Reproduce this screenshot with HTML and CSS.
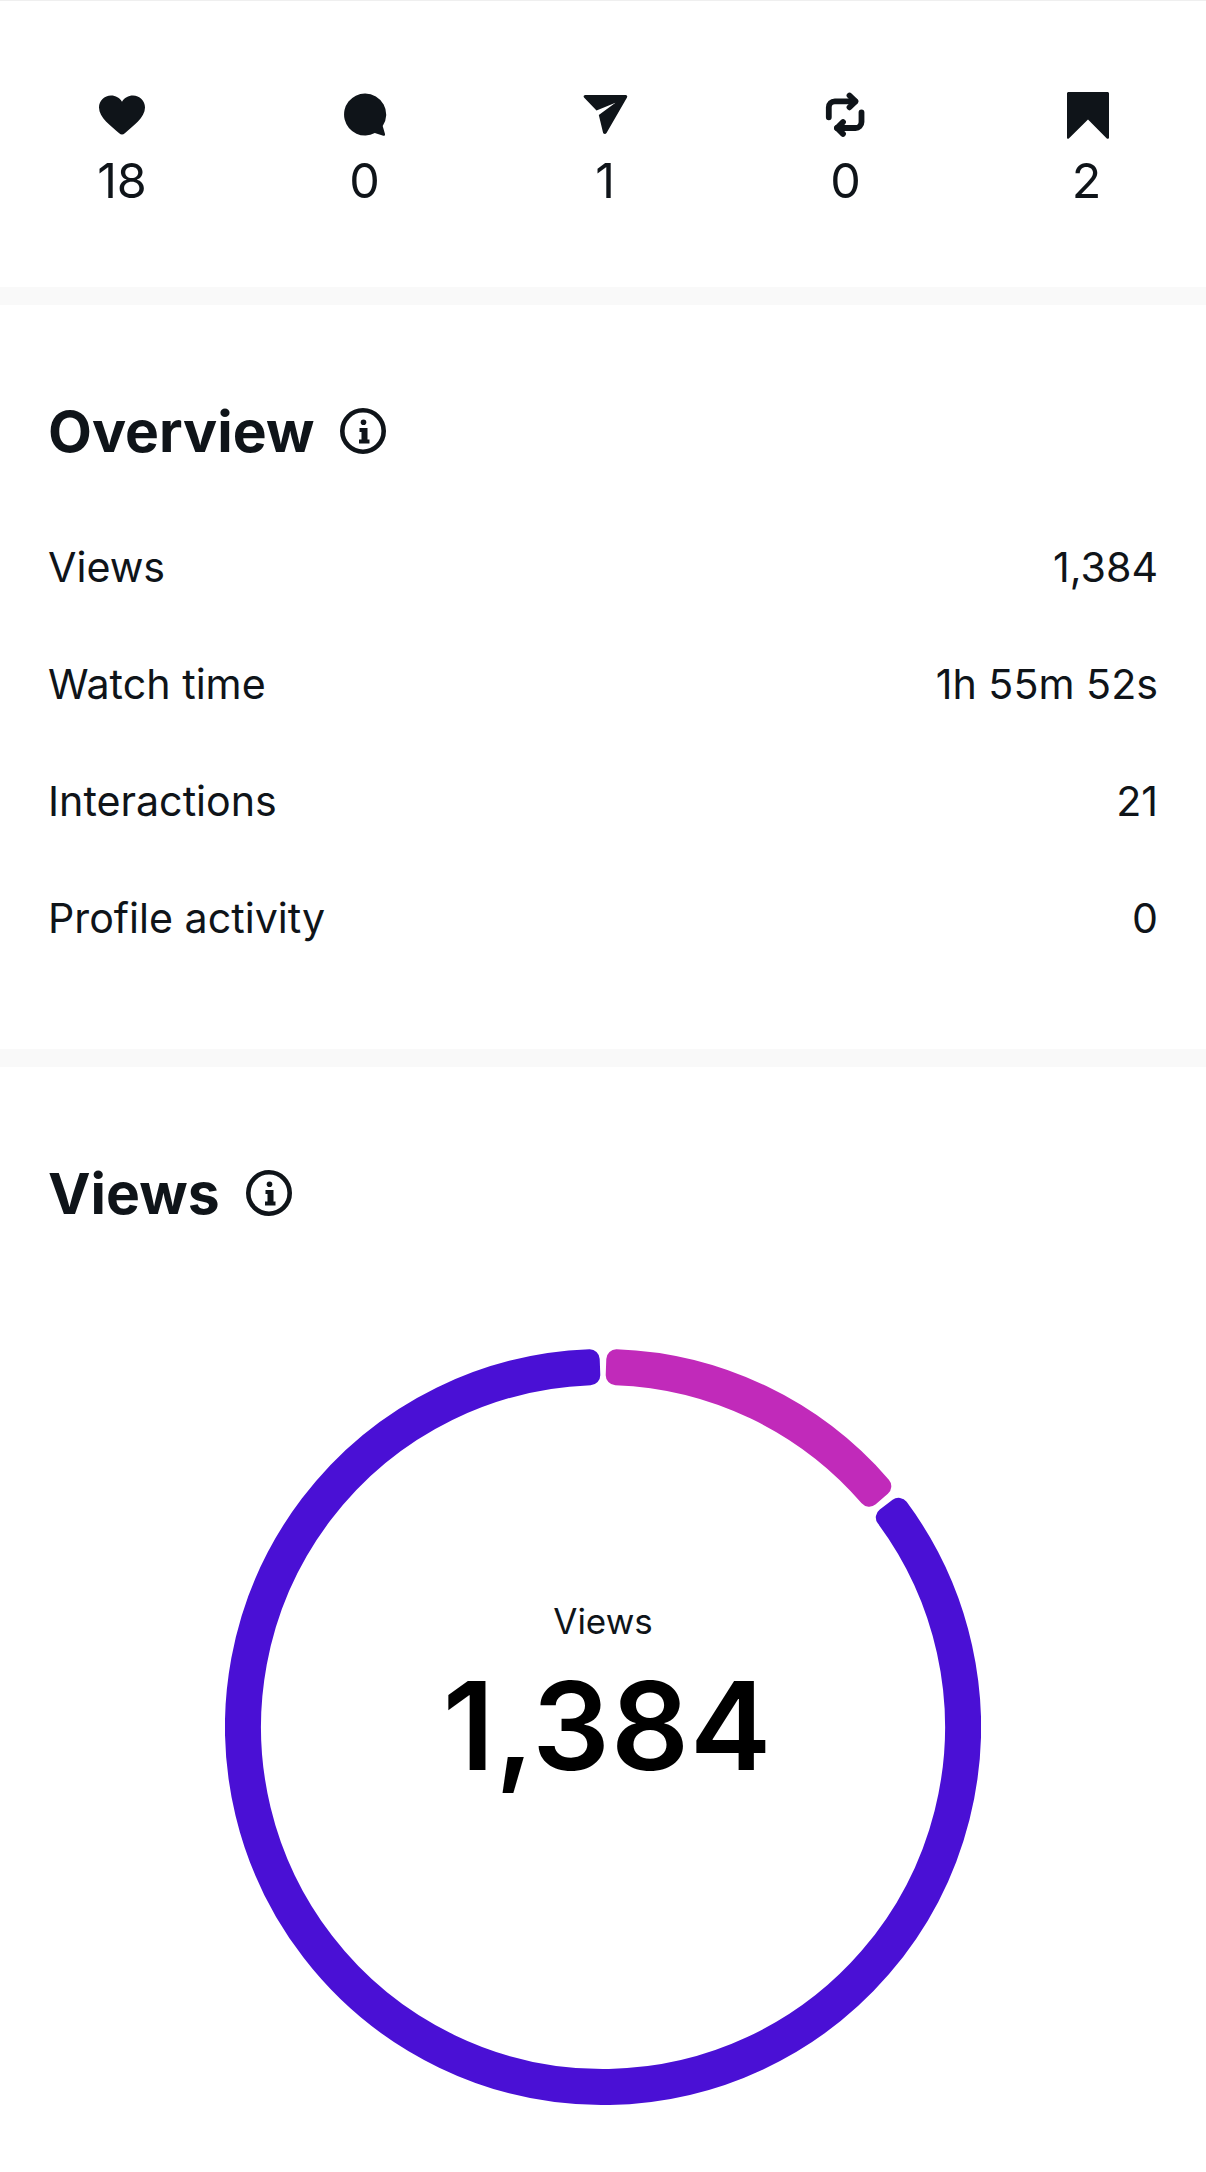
FILE: index.html
```html
<html>

<head>
    <meta charset="UTF-8">
    <title>Insights</title>
    <link rel="stylesheet" href="styles.css">
</head>

<body>
    <div class="stats">
        <div class="stat">
            <svg class="statIcon" viewBox="0 0 48 48">
                <path d="M24 43.500c-1 0-1.900-.5-2.800-1.300C13 35 1 26.500 1 16.500 1 9.500 6.500 4.500 13 4.500c4.800 0 8.600 2.300 11 6.200 2.400-3.900 6.200-6.200 11-6.200 6.500 0 12 5 12 12 0 10-12 18.500-20.200 25.700-.9.800-1.800 1.300-2.800 1.300z" />
            </svg>
            <span>18</span>
        </div>
        <div class="stat">
            <svg class="statIcon" viewBox="0 0 48 48">
                <path d="M24 2.500a21 21 0 1 0 9.800 39.600l8.500 2.700c1.200.3 2-.5 1.700-1.700l-2.300-8A21 21 0 0 0 24 2.500z" />
            </svg>
            <span>0</span>
        </div>
        <div class="stat">
            <svg class="statIcon" viewBox="0 0 48 48">
                <path d="M4.500 4H44.500c1.400 0 2.200 1.300 1.500 2.500L25.500 42c-.9 1.500-3.200 1.200-3.500-.5L17.800 24 34.500 11.700 15.500 19.500 3 6.500C2 5.300 3 4 4.500 4z" />
            </svg>
            <span>1</span>
        </div>
        <div class="stat">
            <svg class="statIcon repost" viewBox="0 0 48 48">
                <path d="M6.800 26.300V16.400a6 6 0 0 1 6-6H33" />
                <path d="M27.500 4.500l6 5.900-6 5.900" />
                <path d="M39.500 21.300V31a6 6 0 0 1-6 6H15" />
                <path d="M21 31.100l-6 5.900 6 5.900" />
            </svg>
            <span>0</span>
        </div>
        <div class="stat">
            <svg class="statIcon" viewBox="0 0 48 48">
                <path d="M4 2.500c0-.8.700-1.500 1.500-1.500h39c.8 0 1.500.7 1.500 1.500v44c0 1.300-1.300 1.800-2.200.9L25 28.500 5.800 47.400c-.9.900-1.800.4-1.800-.9z" />
            </svg>
            <span>2</span>
        </div>
    </div>

    <div class="divider"></div>

    <div class="section overview">
        <div class="sectionTitle">
            <h2>Overview</h2>
            <svg class="infoIcon" viewBox="0 0 46 46">
                <circle cx="23" cy="23" r="20.700" fill="none" stroke="#0f1419" stroke-width="4.600" />
                <circle cx="23.500" cy="14.200" r="2.800" fill="#0f1419" />
                <path d="M19.500 20h8v11.500h2v4H19v-4h2.500V24h-2z" fill="#0f1419" />
            </svg>
        </div>
        <div class="row"><span>Views</span><span>1,384</span></div>
        <div class="row"><span>Watch time</span><span>1h 55m 52s</span></div>
        <div class="row"><span>Interactions</span><span>21</span></div>
        <div class="row"><span>Profile activity</span><span>0</span></div>
    </div>

    <div class="divider"></div>

    <div class="section views">
        <div class="sectionTitle">
            <h2>Views</h2>
            <svg class="infoIcon" viewBox="0 0 46 46">
                <circle cx="23" cy="23" r="20.700" fill="none" stroke="#0f1419" stroke-width="4.600" />
                <circle cx="23.500" cy="14.200" r="2.800" fill="#0f1419" />
                <path d="M19.500 20h8v11.500h2v4H19v-4h2.500V24h-2z" fill="#0f1419" />
            </svg>
        </div>
        <div class="donut">
            <svg viewBox="-378 -378 756 756">
                <path class="slice followers" d="M295.600 -219.200A368 368 0 1 1 -13.290 -367.760L-12.710 -351.770A352 352 0 1 0 282.800 -209.600Z" />
                <path class="slice others" d="M13.290 -367.760A368 368 0 0 1 278.300 -240.800L266.200 -230.300A352 352 0 0 0 12.710 -351.770Z" />
            </svg>
            <div class="donutLabel">
                <div class="donutName">Views</div>
                <div class="donutValue">1,384</div>
            </div>
        </div>
    </div>
</body>

</html>
```

FILE: styles.css
```css
body {
    margin: 0;
    background-color: #fff;
    color: #0f1419;
    font-family: "Inter", sans-serif;
    border-top: 1px solid #efefef;
    overflow: hidden;
}

.stats {
    display: grid;
    grid-template-columns: 244px 241px 240px repeat(2, 241px);
    height: 286px;
    padding-top: 90px;
    box-sizing: border-box;
}

.stat {
    display: flex;
    flex-direction: column;
    align-items: center;
    font-size: 48.500px;
    line-height: 56px;
}

.statIcon {
    width: 48px;
    height: 48px;
    margin-bottom: 14px;
    fill: #0f1419;
}

.repost {
    fill: none;
    stroke: #0f1419;
    stroke-width: 5.800;
    stroke-linecap: round;
    stroke-linejoin: round;
}

.divider {
    height: 18px;
    background-color: #f9f9f9;
}

.section {
    padding: 0 48px;
}

.overview {
    height: 744px;
    padding-top: 96px;
    box-sizing: border-box;
}

.sectionTitle {
    display: flex;
    align-items: center;
    gap: 26px;
    height: 60px;
}

.sectionTitle h2 {
    margin: 0;
    font-size: 57px;
    font-weight: 700;
}

.infoIcon {
    width: 46px;
    height: 46px;
}

.overview .sectionTitle {
    margin-bottom: 47px;
}

.row {
    display: flex;
    justify-content: space-between;
    align-items: center;
    height: 117px;
    font-size: 41.200px;
}

.views {
    padding-top: 96px;
}

.donut {
    position: relative;
    width: 756px;
    height: 756px;
    margin: 126px auto 0;
}

.donut svg {
    display: block;
    width: 100%;
    height: 100%;
}

.slice {
    stroke-width: 20;
    stroke-linejoin: round;
}

.followers {
    fill: #4a10d5;
    stroke: #4a10d5;
}

.others {
    fill: #c12aba;
    stroke: #c12aba;
}

.donutLabel {
    position: absolute;
    top: 250px;
    left: 0;
    right: 0;
    text-align: center;
}

.donutName {
    font-size: 35px;
    line-height: 44px;
}

.donutValue {
    font-size: 122px;
    font-weight: 600;
    line-height: 154px;
    letter-spacing: 1px;
    padding: 6px 0 0 9px;
    color: #000;
}
```
